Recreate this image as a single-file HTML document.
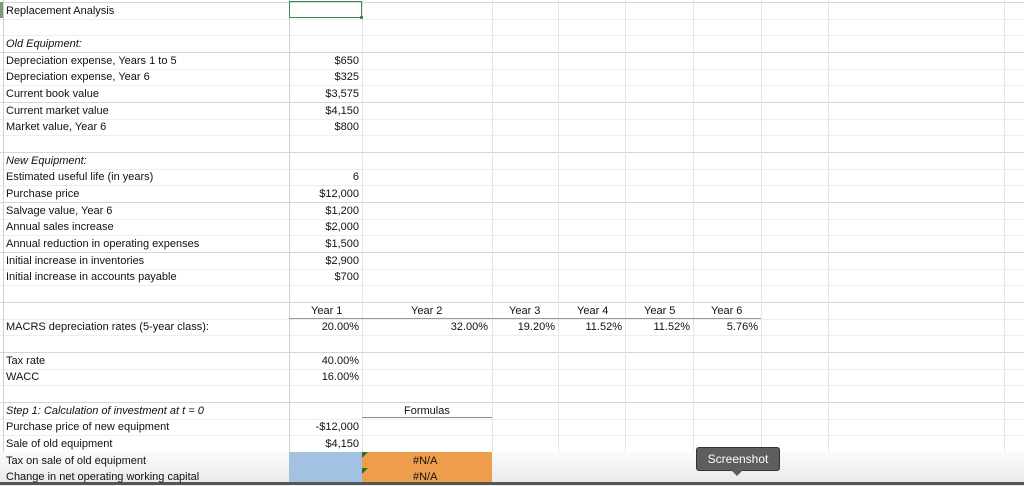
<!DOCTYPE html><html><head><style>
body{margin:0;width:1024px;height:485px;overflow:hidden;background:#fff;position:relative;font-family:"Liberation Sans",Arial,sans-serif;font-size:11px;color:#111}
.h{position:absolute;left:0;width:1024px;height:1px;background:#eeeeee}
.hd{background:#d6d6d6}
.v{position:absolute;top:0;width:1px;height:485px;background:#e6e6e6}
.t{position:absolute;line-height:16px;white-space:nowrap}
.l{left:6px}
.r{text-align:right}
i{font-style:italic}
</style></head><body>
<div id="g"></div>
<script>
var g=document.getElementById('g'),s='';
for(var k=0;k<30;k++){var y=Math.round(2+16.67*k);s+='<div class="h'+(k%3==0?' hd':'')+'" style="top:'+y+'px"></div>';}
[3,289,362,492,558,625,693,761,828,1004].forEach(function(x){s+='<div class="v" style="left:'+x+'px;'+(x==3||x==289?'background:#d0d0d0':'')+'"></div>'});
g.innerHTML=s;
</script>
<div style="position:absolute;left:0;top:2px;width:3px;height:16px;background:#7a9a7a"></div>
<div style="position:absolute;left:289px;top:1px;width:71px;height:15px;border:1.5px solid #3d8a50"></div>
<div style="position:absolute;left:360px;top:16px;width:3px;height:3px;background:#3d8a50"></div>
<div style="position:absolute;left:289px;top:318px;width:472px;height:1px;background:#999"></div>
<div style="position:absolute;left:362px;top:417px;width:130px;height:1px;background:#888"></div>
<div style="position:absolute;left:0;top:452px;width:1024px;height:31px;background:linear-gradient(#fbfbfb,#e9e9e9)"></div>
<div style="position:absolute;left:289px;top:452px;width:73px;height:31px;background:#a3c1e0"></div>
<div style="position:absolute;left:362px;top:452px;width:130px;height:31px;background:#ee9d4c"></div>
<div style="position:absolute;left:362px;top:452px;width:0;height:0;border-top:6px solid #2a6e2a;border-right:6px solid transparent"></div>
<div style="position:absolute;left:362px;top:468px;width:0;height:0;border-top:6px solid #2a6e2a;border-right:6px solid transparent"></div>
<div style="position:absolute;left:0;top:482px;width:1024px;height:3px;background:#555"></div>
<div class="t l" style="top:3px">Replacement Analysis</div>
<div class="t l" style="top:36px"><i>Old Equipment:</i></div>
<div class="t l" style="top:53px">Depreciation expense, Years 1 to 5</div>
<div class="t l" style="top:69px">Depreciation expense, Year 6</div>
<div class="t l" style="top:86px">Current book value</div>
<div class="t l" style="top:103px">Current market value</div>
<div class="t l" style="top:119px">Market value, Year 6</div>
<div class="t l" style="top:153px"><i>New Equipment:</i></div>
<div class="t l" style="top:169px">Estimated useful life (in years)</div>
<div class="t l" style="top:186px">Purchase price</div>
<div class="t l" style="top:203px">Salvage value, Year 6</div>
<div class="t l" style="top:219px">Annual sales increase</div>
<div class="t l" style="top:236px">Annual reduction in operating expenses</div>
<div class="t l" style="top:253px">Initial increase in inventories</div>
<div class="t l" style="top:269px">Initial increase in accounts payable</div>
<div class="t l" style="top:319px">MACRS depreciation rates (5-year class):</div>
<div class="t l" style="top:353px">Tax rate</div>
<div class="t l" style="top:369px">WACC</div>
<div class="t l" style="top:403px"><i>Step 1: Calculation of investment at t = 0</i></div>
<div class="t l" style="top:419px">Purchase price of new equipment</div>
<div class="t l" style="top:436px">Sale of old equipment</div>
<div class="t l" style="top:453px">Tax on sale of old equipment</div>
<div class="t l" style="top:469px">Change in net operating working capital</div>
<div class="t r" style="left:289px;width:70px;top:53px">$650</div>
<div class="t r" style="left:289px;width:70px;top:69px">$325</div>
<div class="t r" style="left:289px;width:70px;top:86px">$3,575</div>
<div class="t r" style="left:289px;width:70px;top:103px">$4,150</div>
<div class="t r" style="left:289px;width:70px;top:119px">$800</div>
<div class="t r" style="left:289px;width:70px;top:169px">6</div>
<div class="t r" style="left:289px;width:70px;top:186px">$12,000</div>
<div class="t r" style="left:289px;width:70px;top:203px">$1,200</div>
<div class="t r" style="left:289px;width:70px;top:219px">$2,000</div>
<div class="t r" style="left:289px;width:70px;top:236px">$1,500</div>
<div class="t r" style="left:289px;width:70px;top:253px">$2,900</div>
<div class="t r" style="left:289px;width:70px;top:269px">$700</div>
<div class="t" style="left:311px;top:303px">Year 1</div>
<div class="t" style="left:411px;top:303px">Year 2</div>
<div class="t" style="left:509px;top:303px">Year 3</div>
<div class="t" style="left:577px;top:303px">Year 4</div>
<div class="t" style="left:644px;top:303px">Year 5</div>
<div class="t" style="left:711px;top:303px">Year 6</div>
<div class="t r" style="left:289px;width:70px;top:319px">20.00%</div>
<div class="t r" style="left:362px;width:126px;top:319px">32.00%</div>
<div class="t r" style="left:492px;width:63px;top:319px">19.20%</div>
<div class="t r" style="left:558px;width:64px;top:319px">11.52%</div>
<div class="t r" style="left:625px;width:65px;top:319px">11.52%</div>
<div class="t r" style="left:693px;width:65px;top:319px">5.76%</div>
<div class="t r" style="left:289px;width:70px;top:353px">40.00%</div>
<div class="t r" style="left:289px;width:70px;top:369px">16.00%</div>
<div class="t" style="left:404px;top:403px">Formulas</div>
<div class="t r" style="left:289px;width:70px;top:419px">-$12,000</div>
<div class="t r" style="left:289px;width:70px;top:436px">$4,150</div>
<div class="t" style="left:413px;top:453px">#N/A</div>
<div class="t" style="left:413px;top:469px">#N/A</div>
<div style="position:absolute;left:696px;top:447px;width:82px;height:22px;background:#5e5e5e;border:1px solid #333;border-radius:3px;color:#fff;font-size:12px;line-height:22px;text-align:center">Screenshot</div>
<div style="position:absolute;left:731px;top:470px;width:0;height:0;border-left:6px solid transparent;border-right:6px solid transparent;border-top:6px solid #5e5e5e"></div>
</body></html>
